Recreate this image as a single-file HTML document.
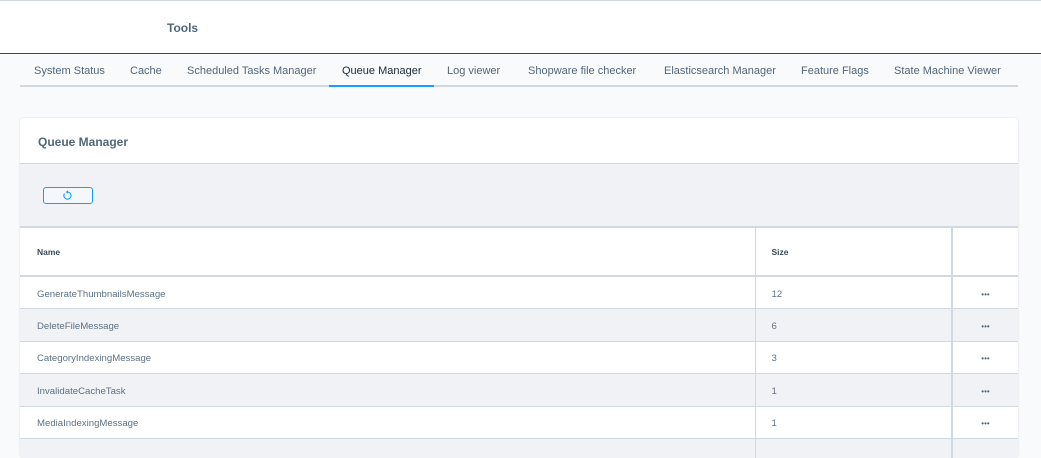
<!DOCTYPE html>
<html><head><style>
*{box-sizing:border-box;margin:0;padding:0}
body{width:1041px;height:449px;overflow:hidden;background:#f9fafb;font-family:"Liberation Sans",sans-serif;color:#52667a;position:relative}
.top{position:absolute;left:0;top:0;width:1041px;height:54px;background:#fff;border-top:1px solid #d1d9e0;border-bottom:1px solid #3a4a5a}
.top span{position:absolute;left:167px;top:20px;font-size:12px;font-weight:bold;color:#52667a}
.tabs{position:absolute;left:20px;top:54px;width:998px;height:33px;border-bottom:2px solid #d1d9e0}
.tab{position:absolute;top:11px;font-size:11px;color:#52667a;white-space:nowrap}
.tab.a{color:#1a2a3a}
.ul{position:absolute;left:329px;top:85px;width:105px;height:2px;background:#189eff}
.card{position:absolute;left:20px;top:118px;width:998px;height:340px;background:#fff;border-radius:4px;box-shadow:0 0 2px rgba(0,0,0,.12);overflow:hidden}
.ch{height:46px;border-bottom:1px solid #d1d9e0;padding:17px 0 0 18px;font-size:12px;font-weight:bold;color:#52667a}
.tb{height:64px;background:#f0f2f5;border-bottom:2px solid #d1d9e0;position:relative}
.btn{position:absolute;left:23px;top:23px;width:50px;height:17px;border:1px solid #189eff;border-radius:3px;background:#f4f8fc}
table{border-collapse:collapse;width:998px;font-size:9.6px}
td{border-bottom:1px solid #d1d9e0;padding-left:17px;padding-top:3px;color:#5e7184}
td.c2{border-left:1px solid #d1d9e0;padding-left:16px;width:197px}
td.c3{border-left:2px solid #d1d9e0;width:66px;text-align:center;padding:3px 0 0;font-size:8px;color:#52667a}
tr.h td{height:48px;font-weight:bold;font-size:8.5px;color:#3a4a5a;border-bottom:2px solid #d1d9e0;padding-top:0}
tr.r td{height:32.5px}
tr.g td{background:#f0f2f5}
</style></head><body>
<div class="top"><span>Tools</span></div>
<div class="tabs">
<span class="tab" style="left:14px">System Status</span>
<span class="tab" style="left:110px">Cache</span>
<span class="tab" style="left:167px">Scheduled Tasks Manager</span>
<span class="tab a" style="left:322px">Queue Manager</span>
<span class="tab" style="left:427px">Log viewer</span>
<span class="tab" style="left:508px">Shopware file checker</span>
<span class="tab" style="left:644px">Elasticsearch Manager</span>
<span class="tab" style="left:781px">Feature Flags</span>
<span class="tab" style="left:874px">State Machine Viewer</span>
</div>
<div class="ul"></div>
<div class="card">
<div class="ch">Queue Manager</div>
<div class="tb"><div class="btn"><svg width="50" height="17" viewBox="0 0 50 17" style="position:absolute;left:-1px;top:-1px"><path d="M21.5 6.5 A3.6 3.6 0 1 0 25 5" fill="none" stroke="#189eff" stroke-width="1.1"/><path d="M25 3.3 L25 6.7 L22.6 5 Z" fill="#189eff"/></svg></div></div>
<table>
<tr class="h"><td>Name</td><td class="c2">Size</td><td class="c3"></td></tr>
<tr class="r"><td>GenerateThumbnailsMessage</td><td class="c2">12</td><td class="c3">•••</td></tr>
<tr class="r g"><td>DeleteFileMessage</td><td class="c2">6</td><td class="c3">•••</td></tr>
<tr class="r"><td>CategoryIndexingMessage</td><td class="c2">3</td><td class="c3">•••</td></tr>
<tr class="r g"><td>InvalidateCacheTask</td><td class="c2">1</td><td class="c3">•••</td></tr>
<tr class="r"><td>MediaIndexingMessage</td><td class="c2">1</td><td class="c3">•••</td></tr>
<tr class="r g"><td></td><td class="c2"></td><td class="c3"></td></tr>
</table>
</div>
</body></html>
